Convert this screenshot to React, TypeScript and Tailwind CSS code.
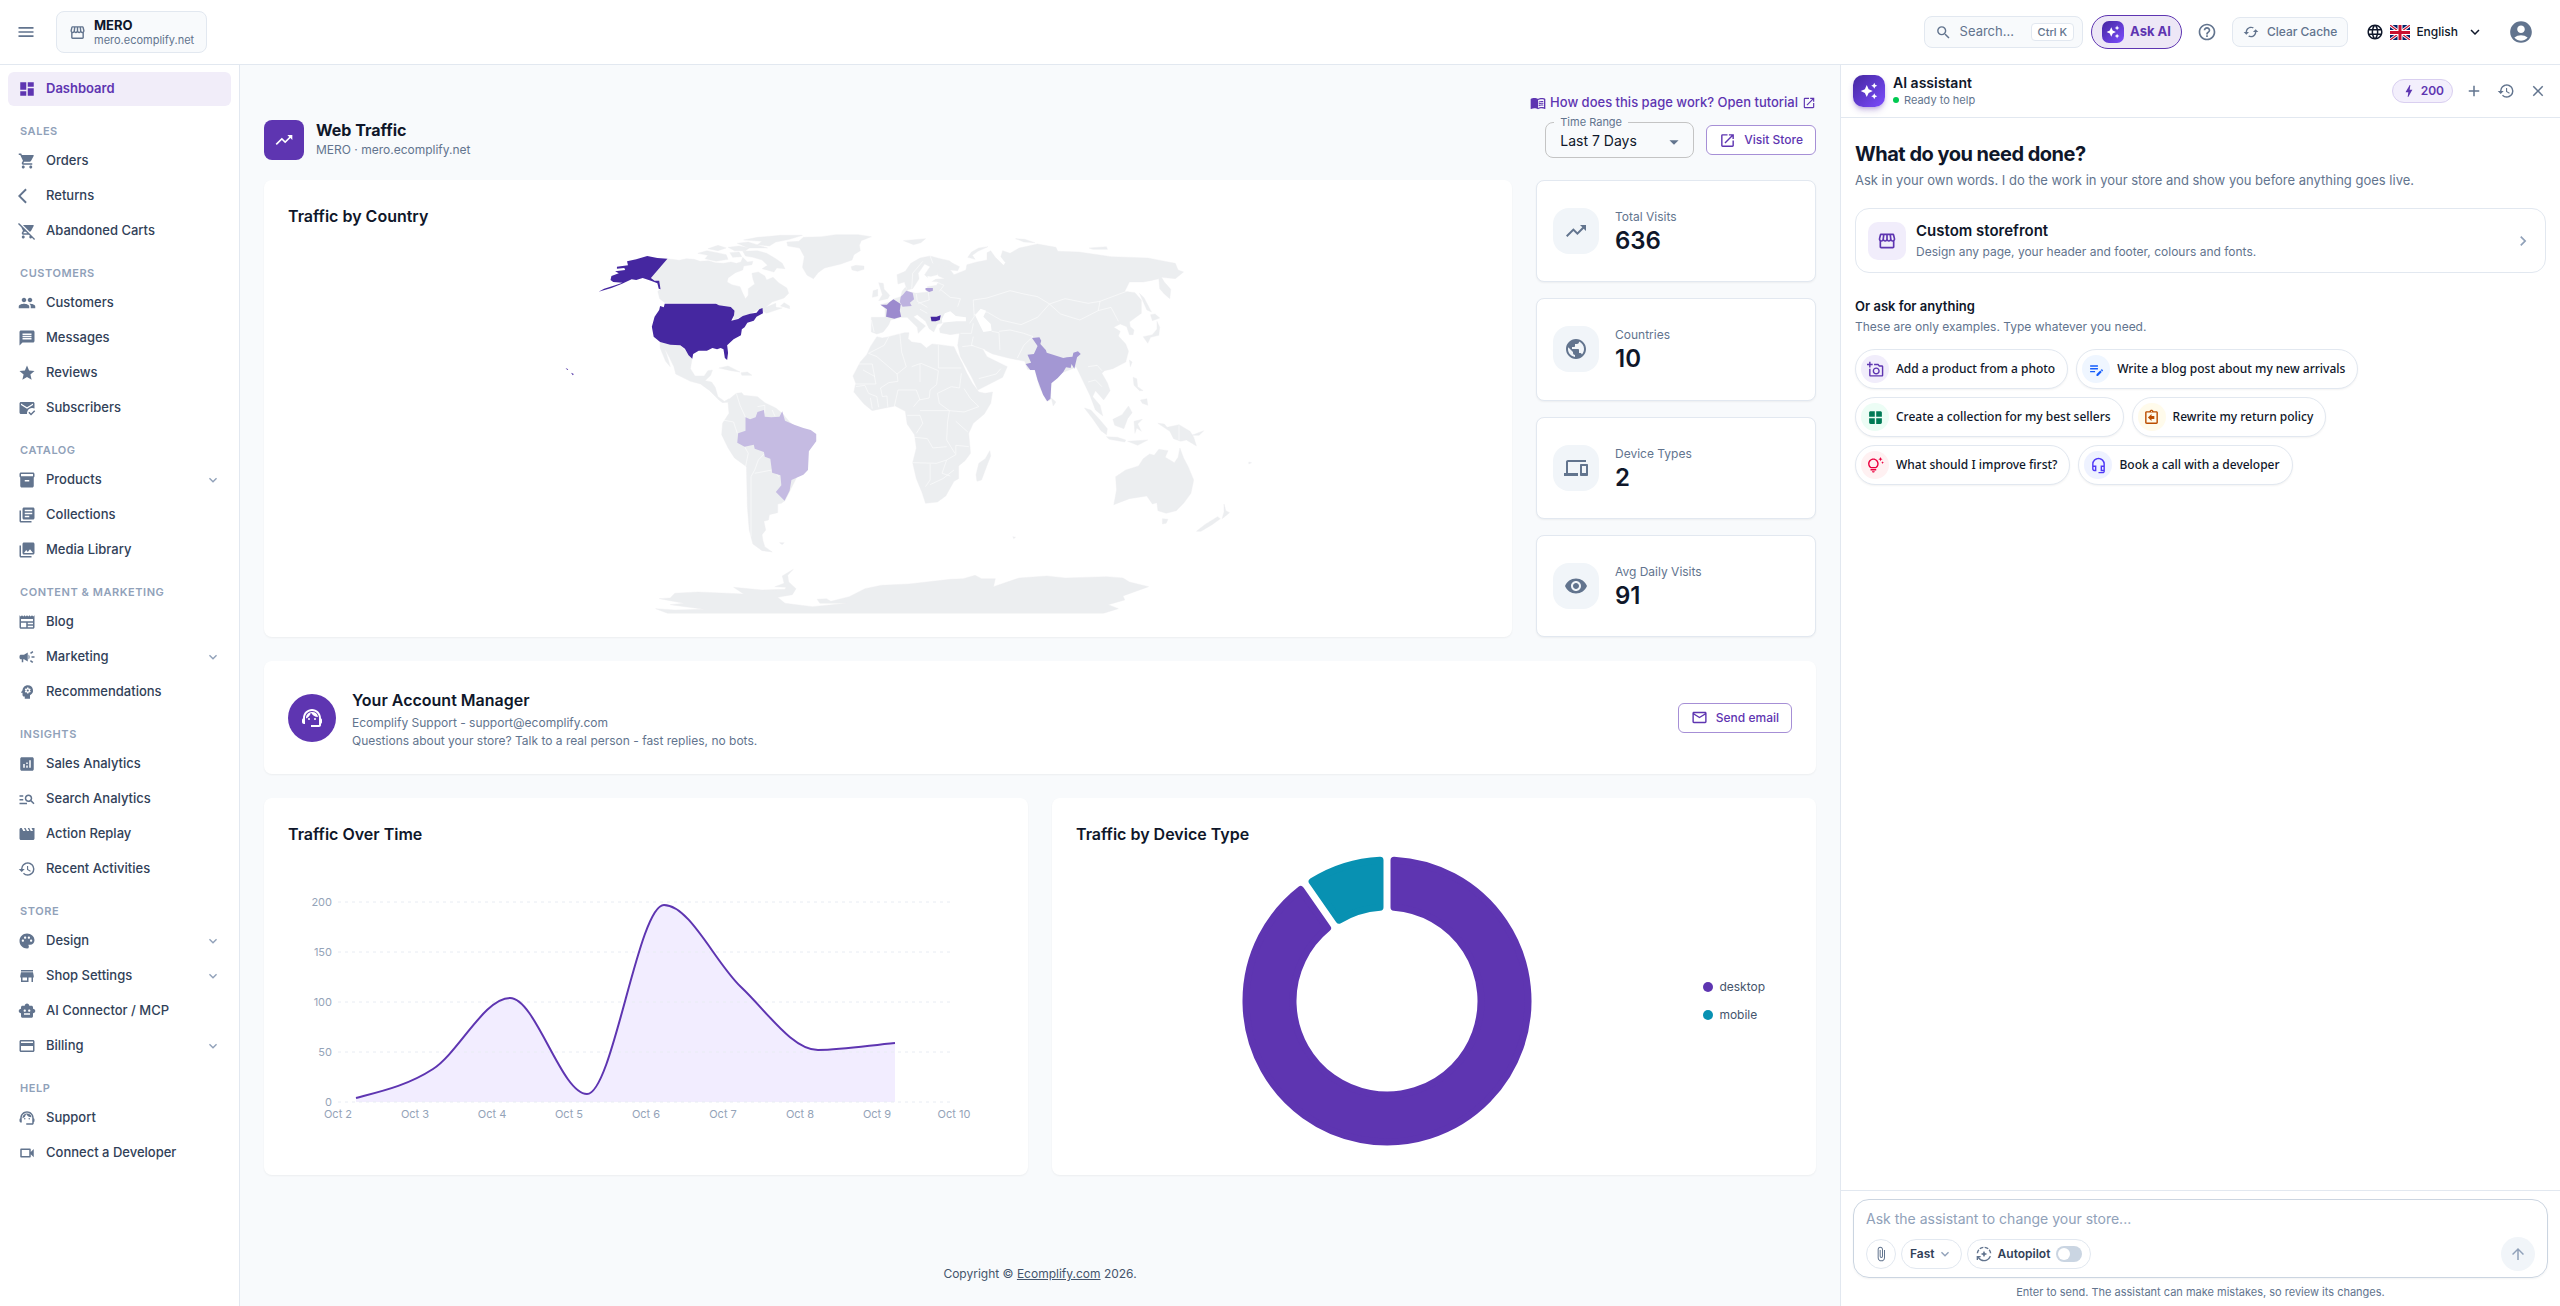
import { useState } from 'react';
import type { ReactNode } from 'react';
import type { IconType } from 'react-icons';
import {
  MdAccountCircle,
  MdAdd,
  MdAnalytics,
  MdArrowBackIos,
  MdArrowDropDown,
  MdArrowUpward,
  MdAttachFile,
  MdAutoAwesome,
  MdAutoMode,
  MdBolt,
  MdCached,
  MdCampaign,
  MdChevronRight,
  MdClose,
  MdCreditCard,
  MdDashboard,
  MdDevices,
  MdEditNote,
  MdExpandMore,
  MdHelpOutline,
  MdHistory,
  MdInventory2,
  MdLanguage,
  MdLibraryBooks,
  MdMailOutline,
  MdManageSearch,
  MdMarkEmailRead,
  MdMenu,
  MdMenuBook,
  MdMessage,
  MdMovie,
  MdNewspaper,
  MdOpenInNew,
  MdOutlineAddAPhoto,
  MdOutlineAssignmentReturn,
  MdOutlineHeadsetMic,
  MdOutlineStorefront,
  MdOutlineTipsAndUpdates,
  MdOutlineVideocam,
  MdPalette,
  MdPeople,
  MdPhotoLibrary,
  MdPsychology,
  MdPublic,
  MdRemoveShoppingCart,
  MdSearch,
  MdShoppingCart,
  MdSmartToy,
  MdStar,
  MdStore,
  MdSupportAgent,
  MdTrendingUp,
  MdVisibility,
  MdWindow
} from 'react-icons/md';

type NavItem = { label: string; icon: IconType; expandable?: boolean };

const navGroups: { title: string; items: NavItem[] }[] = [
  {
    title: 'SALES',
    items: [
      { label: 'Orders', icon: MdShoppingCart },
      { label: 'Returns', icon: MdArrowBackIos },
      { label: 'Abandoned Carts', icon: MdRemoveShoppingCart }
    ]
  },
  {
    title: 'CUSTOMERS',
    items: [
      { label: 'Customers', icon: MdPeople },
      { label: 'Messages', icon: MdMessage },
      { label: 'Reviews', icon: MdStar },
      { label: 'Subscribers', icon: MdMarkEmailRead }
    ]
  },
  {
    title: 'CATALOG',
    items: [
      { label: 'Products', icon: MdInventory2, expandable: true },
      { label: 'Collections', icon: MdLibraryBooks },
      { label: 'Media Library', icon: MdPhotoLibrary }
    ]
  },
  {
    title: 'CONTENT & MARKETING',
    items: [
      { label: 'Blog', icon: MdNewspaper },
      { label: 'Marketing', icon: MdCampaign, expandable: true },
      { label: 'Recommendations', icon: MdPsychology }
    ]
  },
  {
    title: 'INSIGHTS',
    items: [
      { label: 'Sales Analytics', icon: MdAnalytics },
      { label: 'Search Analytics', icon: MdManageSearch },
      { label: 'Action Replay', icon: MdMovie },
      { label: 'Recent Activities', icon: MdHistory }
    ]
  },
  {
    title: 'STORE',
    items: [
      { label: 'Design', icon: MdPalette, expandable: true },
      { label: 'Shop Settings', icon: MdStore, expandable: true },
      { label: 'AI Connector / MCP', icon: MdSmartToy },
      { label: 'Billing', icon: MdCreditCard, expandable: true }
    ]
  },
  {
    title: 'HELP',
    items: [
      { label: 'Support', icon: MdSupportAgent },
      { label: 'Connect a Developer', icon: MdOutlineVideocam }
    ]
  }
];

const stats = [
  { label: 'Total Visits', value: '636', icon: MdTrendingUp },
  { label: 'Countries', value: '10', icon: MdPublic },
  { label: 'Device Types', value: '2', icon: MdDevices },
  { label: 'Avg Daily Visits', value: '91', icon: MdVisibility }
];

const prompts = [
  { label: 'Add a product from a photo', icon: MdOutlineAddAPhoto, tone: 'bg-[#f1edfb] text-[#5e35b1]' },
  { label: 'Write a blog post about my new arrivals', icon: MdEditNote, tone: 'bg-blue-50 text-blue-600' },
  { label: 'Create a collection for my best sellers', icon: MdWindow, tone: 'bg-emerald-50 text-emerald-700' },
  { label: 'Rewrite my return policy', icon: MdOutlineAssignmentReturn, tone: 'bg-amber-50 text-amber-700' },
  { label: 'What should I improve first?', icon: MdOutlineTipsAndUpdates, tone: 'bg-rose-50 text-rose-600' },
  { label: 'Book a call with a developer', icon: MdOutlineHeadsetMic, tone: 'bg-indigo-50 text-indigo-600' }
];

// land without any recorded visits
const land = [
  // canada and the arctic islands
  'M234 116L260 121L275 116L292 118L305 124L324 122L338 128L356 130L372 126L384 130L394 126L398 112L408 126L420 124L418 134L400 138L398 150L382 158L366 174L364 186L374 194L392 200L398 220L404 236L410 226L410 206L424 192L420 176L418 160L432 156L446 168L450 180L464 172L476 188L494 204L498 220L488 234L462 246L448 262L470 250L470 262L484 264L450 280L434 268L414 281L398 288L378 300L380 272L346 256L340 248L228 248L217 236L213 214L220 206L216 186L198 174Z',
  'M300 100L320 92L342 98L362 104L366 118L340 124L316 116L322 106Z',
  'M322 86L344 76L362 84L344 92Z M366 82L390 78L412 84L404 92L380 92Z M370 98L390 96L396 110L376 112Z',
  'M398 94L430 92L450 100L470 116L484 130L490 146L472 144L466 156L440 146L452 136L440 120L420 112L404 108Z',
  'M400 60L430 52L480 46L528 46L500 58L470 66L456 78L430 74L440 64Z M386 70L410 66L452 84L410 84Z',
  'M480 258L488 248L500 258L500 266Z',
  // greenland and iceland
  'M494 66L520 64L530 52L570 50L600 44L650 44L678 50L656 62L652 76L654 92L640 104L636 120L612 132L594 138L576 144L562 158L552 176L538 166L528 142L532 110L522 84L496 78Z',
  'M634 140L644 136L662 138L662 148L648 154L636 150Z',
  // mexico and central america
  'M218 366L240 374L262 376L280 402L288 414L284 446L294 468L314 468L322 452L332 450L328 466L316 482L330 486L338 502L344 530L358 544L368 536L372 546L354 548L346 540L326 512L306 492L284 484L252 462L248 440L238 412L228 386L236 420L240 440L230 424L218 384Z',
  'M346 444L366 438L392 456L372 452Z M394 458L408 456L418 466L396 466Z',
  // south america
  'M366 550L368 538L384 520L396 518L400 526L430 530L446 548L470 564L484 580L500 606L530 640L520 760L490 842L482 850L474 852L474 878L456 884L454 900L444 904L448 930L440 944L442 962L446 980L462 996L440 992L420 972L412 930L408 860L406 740L380 714L366 684L352 644L354 610L368 580Z',
  'M478 968L488 968L484 974Z',
  // africa
  'M690 350L702 354L716 350L750 338L760 338L758 356L766 366L786 370L798 384L810 372L826 374L858 380L864 398L876 430L886 460L898 490L912 516L926 520L942 516L938 550L924 582L900 610L890 640L894 700L882 722L868 738L868 776L858 784L840 828L822 846L796 850L788 816L776 776L768 728L776 684L772 644L756 612L752 574L730 558L700 566L680 572L662 552L640 516L644 490L638 468L654 426L668 404L676 380Z',
  'M936 692L938 708L930 736L918 780L908 784L906 764L912 730L926 716Z',
  // eurasia
  'M745 214L752 202L758 214L775 220L800 216L800 200L820 196L824 186L810 184L812 178L838 176L824 168L820 150L824 130L850 126L870 140L866 152L850 150L858 164L884 150L886 134L908 126L930 120L930 98L938 92L948 112L966 136L970 128L960 110L964 92L980 100L1000 84L1040 72L1080 82L1084 94L1130 96L1160 102L1200 110L1280 114L1310 122L1340 130L1346 150L1358 156L1340 176L1310 172L1316 186L1330 208L1328 236L1316 222L1306 206L1304 176L1286 182L1270 186L1240 186L1230 214L1252 218L1266 240L1266 280L1240 306L1242 320L1250 330L1248 344L1240 344L1234 320L1220 312L1206 322L1220 334L1216 348L1232 372L1238 394L1232 426L1204 446L1186 452L1180 460L1192 488L1198 512L1184 540L1166 512L1160 530L1176 556L1182 588L1166 570L1154 526L1140 486L1124 440L1116 446L1090 460L1070 488L1068 540L1060 544L1044 500L1034 450L1018 448L1012 424L976 414L942 402L920 386L930 410L950 424L974 440L964 472L910 510L896 470L872 410L866 376L870 340L850 344L828 338L826 326L836 308L822 312L814 336L804 326L796 304L778 284L770 290L796 318L780 340L778 322L756 292L742 292L720 300L716 314L704 336L690 342L678 336L678 292L708 292L708 266L698 254L718 246L728 236L742 230Z',
  // scandinavia
  'M736 192L734 164L752 154L764 130L784 114L806 108L828 116L848 122L858 136L836 140L824 134L822 164L800 172L794 164L806 140L794 132L780 160L782 176L768 206L756 210L750 186Z',
  'M694 188L704 190L706 208L718 226L714 236L694 242L702 224Z M682 212L692 208L692 228L680 232Z',
  'M888 112L896 96L912 84L932 80L910 94L898 106L904 118Z M748 62L796 56L786 68L770 74Z M992 56L1012 58L1034 68L1010 66Z M1152 84L1190 80L1192 88L1160 88Z',
  'M1262 220L1272 234L1288 276L1278 270Z M1286 284L1296 282L1306 294L1290 302Z M1300 304L1306 322L1304 346L1286 352L1280 370L1270 350L1290 344L1300 328Z',
  'M1248 472L1256 476L1258 500L1270 512L1262 512L1250 496Z M1264 540L1278 536L1280 556L1268 550Z M1240 420L1246 426L1242 440Z',
  'M1142 564L1156 570L1176 600L1192 626L1190 644L1178 632L1160 596Z M1190 650L1214 652L1232 660L1230 666L1196 658Z M1236 664L1280 660L1258 676Z',
  'M1204 598L1224 584L1238 558L1246 578L1236 596L1228 626L1208 616Z M1250 604L1268 598L1258 612L1266 634L1256 624L1252 640Z',
  'M1302 610L1316 612L1322 622L1348 614L1372 634L1380 652L1386 678L1364 660L1352 664L1336 656L1328 634Z M1376 646L1402 632L1392 646Z',
  // australia and new zealand
  'M1210 770L1232 750L1260 738L1270 716L1284 702L1294 706L1304 688L1324 692L1318 712L1338 728L1346 712L1350 684L1358 714L1368 740L1380 780L1374 820L1358 850L1342 872L1320 880L1302 872L1300 848L1290 852L1278 828L1240 836L1206 854L1212 810Z',
  'M1312 896L1324 898L1320 910L1312 912Z M1446 852L1450 872L1458 878L1442 896L1446 876Z M1432 890L1438 896L1420 914L1396 934L1386 934L1404 914Z M1500 726L1506 728L1500 732Z',
  'M1070 534L1080 546L1074 558Z M986 950L992 952L988 956Z',
  // antarctica
  'M208 1166L250 1170L314 1168L260 1158L240 1154L270 1150L216 1136L240 1134L250 1120L300 1116L400 1122L378 1102L440 1110L490 1108L492 1102L468 1100L488 1090L484 1068L508 1048L496 1066L498 1086L514 1106L506 1124L474 1132L490 1150L550 1160L624 1150L566 1150L560 1138L580 1136L590 1144L630 1130L664 1106L700 1096L760 1092L850 1078L878 1076L904 1066L918 1076L948 1076L944 1100L1000 1074L1060 1068L1100 1074L1190 1070L1226 1074L1240 1086L1282 1100L1226 1128L1230 1140L1194 1154L1216 1166L1184 1180L234 1180Z'
];

const seas = [
  'M904 286L916 266L928 272L922 290L938 312L940 332L922 336L914 314Z',
  'M832 296L838 280L850 274L862 288L884 292L884 304L864 304L846 306L832 308Z',
  'M804 186L800 168L812 172L824 172L812 182Z'
];

const borders = [
  'M716 350L706 376L672 400L690 410L734 462L754 440L744 396L740 340',
  'M650 432L680 432L688 492L642 492M734 462L736 484L716 488L698 504L702 530M660 450L686 470',
  'M766 440L786 430L824 452L820 494L806 510L804 534L782 540L770 560M824 374L824 444L874 444M784 432L784 486',
  'M644 500L664 496L672 520L690 530L694 562M702 530L712 528L714 562M728 560L736 510L776 510L784 540M676 534L680 566',
  'M874 460L870 504L852 500L822 520L826 550L848 572L880 576L912 560L894 536L880 506',
  'M784 572L848 572L844 606L842 660L860 700M756 586L784 586L790 610L776 640M772 652L800 656L812 684L842 680M862 604L888 636',
  'M768 728L820 730L842 720L862 704L862 676L890 680M806 732L806 780L796 800M806 794L834 776L858 750M842 720L832 760L850 768',
  'M892 310L902 290L900 240L930 234L980 212L1010 222L1040 230L1066 252L1100 236L1150 250L1176 244L1172 272L1132 300L1090 282L1066 252',
  'M902 284L930 276L960 300L1004 314L1040 292L1066 252M956 334L980 330L1010 340L1030 350L1010 376L996 414M940 334L956 338L958 390M900 350L896 376L926 390',
  'M830 210L850 232L872 236L866 260M802 216L804 240L780 250M776 222L778 244L800 262M784 268L800 280M826 214L836 196L820 186',
  'M872 340L896 340L900 310M876 380L900 376M912 476L950 462L960 446M1150 440L1170 436L1180 452M1150 486L1166 480L1180 500M1348 616L1348 660',
  'M766 206L768 160L790 124M806 108L812 130M1176 244L1234 214M1172 272L1200 262L1216 304M678 300L684 336',
  'M384 520L392 556L404 592M354 600L378 606L386 640M402 680L410 700L404 740M446 700L432 720L424 750L416 770L416 950M424 760L462 750M462 740L476 770M430 560L446 556L446 580M462 570L468 588'
];

const visited = [
  { d: 'M228 251L340 251L346 256L372 261L380 272L379 286L373 302L388 297L398 288L414 281L428 278L434 268L441 264L442 280L428 290L422 302L408 308L402 322L396 328L394 346L378 358L364 376L366 398L364 420L359 414L356 388L350 384L342 388L332 384L320 392L302 392L290 402L288 416L280 406L272 386L262 376L240 374L218 366L204 350L200 320L206 290L216 270L218 258L226 262Z', fill: '#4527a0' },
  { d: 'M234 116L198 174L206 182L216 182L219 208L215 206L212 190L198 182L180 174L166 180L156 178L134 192L112 204L84 215L96 206L120 196L136 188L116 186L110 180L112 168L128 160L120 154L142 150L140 144L124 146L124 140L148 136L146 124L166 118L190 108L212 114Z', fill: '#4527a0' },
  { d: 'M12 444L18 448L16 450Z M24 458L30 462L28 466Z', fill: '#4527a0' },
  { d: 'M404 592L414 598L426 592L430 576L444 570L446 590L460 592L478 590L484 574L490 602L510 614L530 624L546 630L558 642L558 664L542 694L540 750L530 764L504 780L500 812L489 842L470 816L482 796L480 766L462 758L458 716L446 710L444 696L424 686L422 674L402 680L386 668L388 640L404 632Z', fill: '#c5bbe2' },
  { d: 'M698 254L712 254L718 246L726 238L742 252L740 272L743 290L728 296L710 290L712 268Z', fill: '#9c8bce' },
  { d: 'M742 230L748 222L754 212L768 218L771 238L762 248L766 258L746 260L740 246Z', fill: '#bdb2df' },
  { d: 'M796 204L812 204L812 212L804 216L796 210Z', fill: '#ae9fd8' },
  { d: 'M807 290L820 290L829 286L827 300L818 304L809 304Z', fill: '#4527a0' },
  { d: 'M1028 354L1044 352L1048 362L1046 372L1058 390L1060 398L1096 414L1104 412L1116 410L1118 398L1128 394L1134 402L1126 412L1120 446L1114 432L1112 444L1102 442L1096 456L1084 474L1070 490L1068 536L1061 544L1052 524L1040 480L1034 450L1024 450L1014 432L1026 428L1018 404L1032 402L1040 378Z', fill: '#a397d3' }
];

function WorldMap() {
  return (
    <svg viewBox="0 12 784 384" className="h-96 w-full" role="img" aria-label="Visits by country">
      <g transform="translate(64 0) scale(.4592 .3333)" strokeLinejoin="round">
        {land.map((d) => (
          <path key={d} d={d} fill="#eceef0" stroke="#eceef0" strokeWidth="1" />
        ))}
        {seas.map((d) => (
          <path key={d} d={d} fill="#fff" />
        ))}
        {borders.map((d) => (
          <path key={d} d={d} fill="none" stroke="#fff" strokeWidth="1.4" />
        ))}
        {visited.map((c) => (
          <path key={c.d} d={c.d} fill={c.fill} />
        ))}
      </g>
    </svg>
  );
}

const visits = [4, 33, 104, 8, 197, 115, 52, 59];
const days = ['Oct 2', 'Oct 3', 'Oct 4', 'Oct 5', 'Oct 6', 'Oct 7', 'Oct 8', 'Oct 9', 'Oct 10'];
const ticks = [0, 50, 100, 150, 200];

const chartX = (i: number) => 92 + i * 77;
const chartY = (v: number) => 256 - v;

// monotone cubic through the daily totals
function curve(values: number[]) {
  const slopes = values.slice(1).map((v, i) => v - values[i]);
  const tangents = values.map((_, i) => {
    if (i === 0) return slopes[0] * 0.7;
    if (i === values.length - 1) return slopes[i - 1];
    const a = slopes[i - 1];
    const b = slopes[i];
    return a * b <= 0 ? 0 : Math.sign(a) * Math.min(Math.abs(a) * 2, Math.abs(b) * 2, Math.abs(a + b) / 2);
  });
  let d = `M${chartX(0)} ${chartY(values[0])}`;
  for (let i = 0; i < values.length - 1; i++) {
    const third = 77 / 3;
    d += `C${chartX(i) + third} ${chartY(values[i] + tangents[i] / 3)} ${chartX(i + 1) - third} ${chartY(values[i + 1] - tangents[i + 1] / 3)} ${chartX(i + 1)} ${chartY(values[i + 1])}`;
  }
  return d;
}

function LineChart() {
  const line = curve(visits);
  return (
    <svg viewBox="0 0 764 290" className="w-full font-['Inter',sans-serif] text-[11px]" role="img" aria-label="Traffic over time">
      <path d={`${line}V256H92Z`} fill="#7c4dff" fillOpacity=".1" />
      {ticks.map((t) => (
        <g key={t}>
          <line x1="74" x2="687" y1={chartY(t)} y2={chartY(t)} stroke="#e8ecf3" strokeDasharray="3 4" />
          <text x="68" y={chartY(t) + 4} textAnchor="end" fill="#94a3b8">{t}</text>
        </g>
      ))}
      <path d={line} fill="none" stroke="#5e35b1" strokeWidth="2" />
      {days.map((day, i) => (
        <text key={day} x={74 + i * 77} y="272" textAnchor="middle" fill="#94a3b8">{day}</text>
      ))}
    </svg>
  );
}

// ring slice whose sides keep a constant distance from its neighbours
function slice(from: number, to: number) {
  const outer = 141;
  const inner = 94;
  const pad = 7;
  const point = (r: number, a: number) => `${150 + r * Math.sin(a)} ${150 - r * Math.cos(a)}`;
  const o = Math.asin(pad / outer);
  const n = Math.asin(pad / inner);
  const large = to - from > Math.PI ? 1 : 0;
  return `M${point(outer, from + o)}A${outer} ${outer} 0 ${large} 1 ${point(outer, to - o)}L${point(inner, to - n)}A${inner} ${inner} 0 ${large} 0 ${point(inner, from + n)}Z`;
}

function DonutChart() {
  const full = Math.PI * 2;
  const split = full * 0.903;
  return (
    <svg viewBox="0 0 300 300" className="size-[300px]" role="img" aria-label="Traffic by device type">
      <g strokeWidth="7" strokeLinejoin="round">
        <path d={slice(0, split)} fill="#5e35b1" stroke="#5e35b1" />
        <path d={slice(split, full)} fill="#0891b2" stroke="#0891b2" />
      </g>
    </svg>
  );
}

function Flag() {
  return (
    <svg viewBox="0 0 20 15" className="h-[15px] w-5" aria-hidden="true">
      <path d="M0 0h20v15H0z" fill="#012169" />
      <path d="M0 0l20 15M20 0L0 15" stroke="#fff" strokeWidth="3" />
      <path d="M0 0l20 15M20 0L0 15" stroke="#c8102e" strokeWidth="1.2" />
      <path d="M10 0v15M0 7.5h20" stroke="#fff" strokeWidth="5" />
      <path d="M10 0v15M0 7.5h20" stroke="#c8102e" strokeWidth="3" />
    </svg>
  );
}

function Card({ className, children }: { className: string; children: ReactNode }) {
  return <section className={`rounded-lg bg-white shadow-xs ${className}`}>{children}</section>;
}

function Header() {
  return (
    <header className="flex h-[65px] items-center border-b border-[#e2e8f0] bg-white pr-[26px] pl-4">
      <button aria-label="Toggle menu" className="text-slate-500">
        <MdMenu size={20} />
      </button>
      <button className="ml-5 flex h-[42px] items-center gap-2 rounded-lg border border-[#e2e8f0] bg-[#f8fafc] px-3 text-left">
        <MdOutlineStorefront size={17} className="text-slate-500" />
        <span className="flex flex-col">
          <span className="text-[13px] leading-4 font-bold text-[#0f172a]">MERO</span>
          <span className="text-[11px] leading-[14px] text-slate-500">mero.ecomplify.net</span>
        </span>
      </button>

      <div className="ml-auto flex items-center">
        <button className="flex h-8 items-center rounded-lg border border-[#e2e8f0] bg-[#f8fafc] pr-2 pl-2.5 text-[13px] text-slate-500">
          <MdSearch size={17} />
          <span className="ml-2 w-[71px] text-left">Search...</span>
          <kbd className="rounded border border-[#e2e8f0] bg-white px-1.5 font-['Inter',sans-serif] text-[11px] leading-4 font-medium">Ctrl K</kbd>
        </button>
        <button className="ml-2 flex h-[34px] items-center gap-1.5 rounded-full border border-[#5e35b1] bg-[#ede7f6] px-2.5 text-[13px] font-bold text-[#5e35b1]">
          <span className="flex size-[22px] items-center justify-center rounded-[7px] bg-gradient-to-br from-[#4527a0] to-[#7c4dff] text-white">
            <MdAutoAwesome size={14} />
          </span>
          Ask AI
        </button>
        <button aria-label="Help" className="ml-[15px] text-slate-500">
          <MdHelpOutline size={20} />
        </button>
        <button className="ml-[15px] flex h-[30px] items-center gap-2 rounded-lg border border-[#e2e8f0] bg-[#f8fafc] px-2.5 text-[12px] font-medium text-slate-500">
          <MdCached size={16} />
          Clear Cache
        </button>
        <button className="ml-[18px] flex items-center gap-1.5 text-[12px] font-medium text-[#0f172a]">
          <MdLanguage size={18} />
          <Flag />
          English
          <MdExpandMore size={18} className="ml-0.5" />
        </button>
        <button aria-label="Account" className="ml-6 text-slate-500">
          <MdAccountCircle size={26} />
        </button>
      </div>
    </header>
  );
}

function Sidebar() {
  return (
    <nav className="flex w-60 shrink-0 flex-col gap-px border-r border-[#e2e8f0] bg-white px-2 pt-[7px] text-[13px] font-medium text-slate-700">
      <a href="#dashboard" className="flex h-[34px] items-center gap-2.5 rounded-md bg-[#f1edf9] px-2.5 font-semibold text-[#5e35b1]">
        <MdDashboard size={18} />
        Dashboard
      </a>
      {navGroups.map((group) => (
        <div key={group.title} className="flex flex-col gap-px">
          <h2 className="px-3 pt-4 pb-1 text-[11px] leading-4 font-semibold tracking-wider text-slate-400">{group.title}</h2>
          {group.items.map((item) => (
            <a key={item.label} href="#" className="flex h-[34px] items-center gap-2.5 rounded-md px-2.5">
              <item.icon size={18} className="text-slate-500" />
              {item.label}
              {item.expandable && <MdExpandMore size={16} className="ml-auto text-slate-400" />}
            </a>
          ))}
        </div>
      ))}
    </nav>
  );
}

function Dashboard() {
  const [range, setRange] = useState('7');

  return (
    <main className="flex min-w-0 flex-1 flex-col bg-[#f8fafc] px-6 pt-7">
      <a href="#tutorial" className="flex h-5 items-center gap-1 self-end text-[13px] font-medium text-[#5e35b1]">
        <MdMenuBook size={16} />
        How does this page work? Open tutorial
        <MdOpenInNew size={14} />
      </a>

      <div className="mt-[7px] flex h-10 items-center">
        <div className="flex size-10 items-center justify-center rounded-lg bg-[#5e35b1] text-white">
          <MdTrendingUp size={20} />
        </div>
        <div className="ml-3">
          <h1 className="text-[16px] leading-5 font-bold text-[#0f172a]">Web Traffic</h1>
          <p className="text-[12px] leading-5 text-slate-500">MERO · mero.ecomplify.net</p>
        </div>
        <fieldset className="-mt-[7px] ml-auto w-[149px] rounded-lg border border-[#c4c4c4] px-2 text-[14px]">
          <legend className="px-1.5 text-[11px] leading-[14px] text-slate-500">
            <label htmlFor="range">Time Range</label>
          </legend>
          <div className="flex h-7 items-start pt-0.5">
            <select
              id="range"
              value={range}
              onChange={(e) => setRange(e.target.value)}
              className="w-full appearance-none bg-transparent px-1.5 leading-5 text-[#0f172a] outline-none"
            >
              <option value="7">Last 7 Days</option>
              <option value="30">Last 30 Days</option>
            </select>
            <MdArrowDropDown size={22} className="pointer-events-none shrink-0 text-slate-500" />
          </div>
        </fieldset>
        <a href="#store" className="ml-3 flex h-[30px] items-center gap-2 rounded-md border border-[#a68fd6] bg-white px-3 text-[12px] font-medium text-[#5e35b1]">
          <MdOpenInNew size={17} />
          Visit Store
        </a>
      </div>

      <div className="mt-5 flex gap-6">
        <Card className="min-w-0 flex-1 px-6 pt-6">
          <h2 className="mb-1 text-[16px] leading-6 font-semibold text-[#0f172a]">Traffic by Country</h2>
          <WorldMap />
        </Card>
        <div className="flex h-[457px] w-[280px] flex-col gap-4">
          {stats.map((stat) => (
            <div key={stat.label} className="flex flex-1 items-center gap-4 rounded-lg border border-[#e2e8f0] bg-white px-4 shadow-xs">
              <div className="flex size-[46px] items-center justify-center rounded-2xl bg-slate-100 text-slate-500">
                <stat.icon size={24} />
              </div>
              <div className="pt-0.5">
                <p className="text-[12px] leading-[18px] text-slate-500">{stat.label}</p>
                <p className="text-[24px] leading-[30px] font-semibold text-[#0f172a]">{stat.value}</p>
              </div>
            </div>
          ))}
        </div>
      </div>

      <Card className="mt-6 flex h-[113px] items-center px-6">
        <div className="flex size-12 items-center justify-center rounded-full bg-[#5e35b1] text-white">
          <MdSupportAgent size={24} />
        </div>
        <div className="ml-4 pt-0.5">
          <h2 className="text-[16px] leading-6 font-semibold text-[#0f172a]">Your Account Manager</h2>
          <p className="mt-0.5 text-[12px] leading-[18px] text-slate-500">Ecomplify Support - support@ecomplify.com</p>
          <p className="text-[12px] leading-[18px] text-slate-500">Questions about your store? Talk to a real person - fast replies, no bots.</p>
        </div>
        <a href="mailto:support@ecomplify.com" className="ml-auto flex h-[30px] items-center gap-2 rounded-md border border-[#a68fd6] px-3 text-[12px] font-medium text-[#5e35b1]">
          <MdMailOutline size={17} />
          Send email
        </a>
      </Card>

      <div className="mt-6 grid grid-cols-2 gap-6">
        <Card className="h-[377px] pt-6">
          <h2 className="px-6 text-[16px] leading-6 font-semibold text-[#0f172a]">Traffic Over Time</h2>
          <LineChart />
        </Card>
        <Card className="h-[377px] pt-6">
          <h2 className="px-6 text-[16px] leading-6 font-semibold text-[#0f172a]">Traffic by Device Type</h2>
          <div className="mt-[5px] flex items-center pr-[51px] pl-[18px]">
            <div className="flex flex-1 justify-center">
              <DonutChart />
            </div>
            <ul className="flex flex-col gap-2.5 text-[12px] leading-[18px] text-slate-600">
              <li className="flex items-center gap-1.5">
                <span className="size-2.5 rounded-full bg-[#5e35b1]" />
                desktop
              </li>
              <li className="flex items-center gap-1.5">
                <span className="size-2.5 rounded-full bg-[#0891b2]" />
                mobile
              </li>
            </ul>
          </div>
        </Card>
      </div>

      <footer className="mt-auto pt-6 pb-[23px] text-center text-[12px] leading-[18px] text-slate-600">
        Copyright © <a href="https://ecomplify.com" className="underline">Ecomplify.com</a> 2026.
      </footer>
    </main>
  );
}

function Assistant() {
  const [autopilot, setAutopilot] = useState(false);

  return (
    <aside className="flex w-[720px] shrink-0 flex-col border-l border-[#e2e8f0] bg-white">
      <div className="flex h-[53px] items-center border-b border-[#e2e8f0] px-3">
        <div className="flex size-8 items-center justify-center rounded-[10px] bg-gradient-to-br from-[#4527a0] to-[#7c4dff] text-white shadow-md shadow-[#5e35b1]/30">
          <MdAutoAwesome size={18} />
        </div>
        <div className="ml-2">
          <h2 className="text-[14px] leading-[18px] font-semibold text-[#0f172a]">AI assistant</h2>
          <p className="flex items-center gap-[5px] text-[11px] leading-4 text-slate-500">
            <span className="size-1.5 rounded-full bg-green-500" />
            Ready to help
          </p>
        </div>
        <button className="ml-auto flex h-6 items-center gap-1 rounded-full border border-[#d9cff0] bg-[#f3effc] px-2 text-[12px] font-semibold text-[#5e35b1]">
          <MdBolt size={16} />
          200
        </button>
        <div className="ml-3 flex items-center gap-3.5 pr-px text-slate-500">
          <button aria-label="New chat"><MdAdd size={18} /></button>
          <button aria-label="History"><MdHistory size={18} /></button>
          <button aria-label="Close"><MdClose size={18} /></button>
        </div>
      </div>

      <div className="flex-1 px-3.5 pt-[22px]">
        <h1 className="text-[20px] leading-7 font-bold tracking-tight text-[#0f172a]">What do you need done?</h1>
        <p className="mt-0.5 text-[13px] leading-5 text-slate-500">Ask in your own words. I do the work in your store and show you before anything goes live.</p>

        <button className="mt-[18px] flex h-[65px] w-full items-center rounded-[14px] border border-[#e2e8f0] px-3 text-left">
          <span className="flex size-[38px] items-center justify-center rounded-[10px] bg-[#f1edfb] text-[#5e35b1]">
            <MdOutlineStorefront size={20} />
          </span>
          <span className="ml-2.5 flex flex-col">
            <span className="text-[15px] leading-[22px] font-semibold text-[#0f172a]">Custom storefront</span>
            <span className="text-[12px] leading-5 text-slate-500">Design any page, your header and footer, colours and fonts.</span>
          </span>
          <MdChevronRight size={20} className="ml-auto text-slate-400" />
        </button>

        <h2 className="mt-[23px] text-[13px] leading-5 font-semibold text-[#0f172a]">Or ask for anything</h2>
        <p className="text-[12px] leading-[22px] text-slate-500">These are only examples. Type whatever you need.</p>
        <div className="mt-[11px] flex max-w-[520px] flex-wrap gap-2">
          {prompts.map((prompt) => (
            <button
              key={prompt.label}
              className="flex h-10 items-center gap-[7px] rounded-full border border-[#e2e8f0] bg-white pr-3 pl-[5px] font-['Noto_Sans',sans-serif] text-[12px] font-medium text-[#0f172a] shadow-xs"
            >
              <span className={`flex size-7 items-center justify-center rounded-full ${prompt.tone}`}>
                <prompt.icon size={17} />
              </span>
              {prompt.label}
            </button>
          ))}
        </div>
      </div>

      <div className="border-t border-[#e2e8f0] px-3 pt-2 pb-1.5">
        <div className="rounded-2xl border border-[#cbd5e1] px-3 pt-2 pb-1.5 shadow-xs">
          <textarea
            aria-label="Message"
            rows={1}
            placeholder="Ask the assistant to change your store..."
            className="block h-[22px] w-full resize-none text-[14px] leading-[22px] outline-none placeholder:text-slate-400"
          />
          <div className="mt-[7px] flex items-center gap-[5px] text-[12px] font-semibold text-slate-700">
            <button aria-label="Attach a file" className="flex size-[30px] items-center justify-center rounded-full border border-[#e2e8f0] text-slate-500">
              <MdAttachFile size={16} />
            </button>
            <button className="flex h-[30px] items-center gap-0.5 rounded-full border border-[#e2e8f0] px-2">
              Fast
              <MdExpandMore size={16} className="text-slate-400" />
            </button>
            <label className="flex h-[30px] items-center gap-1.5 rounded-full border border-[#e2e8f0] px-2">
              <MdAutoMode size={16} className="text-slate-500" />
              Autopilot
              <input
                type="checkbox"
                role="switch"
                checked={autopilot}
                onChange={(e) => setAutopilot(e.target.checked)}
                className="h-4 w-[26px] appearance-none rounded-full bg-slate-300 p-0.5 before:block before:size-3 before:rounded-full before:bg-white checked:bg-[#5e35b1] checked:before:ml-2.5"
              />
            </label>
            <button aria-label="Send" className="ml-auto flex size-[34px] items-center justify-center rounded-full bg-slate-100 text-slate-400">
              <MdArrowUpward size={18} />
            </button>
          </div>
        </div>
        <p className="mt-1.5 text-center text-[11px] leading-4 text-slate-500">Enter to send. The assistant can make mistakes, so review its changes.</p>
      </div>
    </aside>
  );
}

export default function App() {
  return (
    <div className="flex min-h-screen flex-col font-['Inter',sans-serif]">
      <Header />
      <div className="flex flex-1">
        <Sidebar />
        <Dashboard />
        <Assistant />
      </div>
    </div>
  );
}
